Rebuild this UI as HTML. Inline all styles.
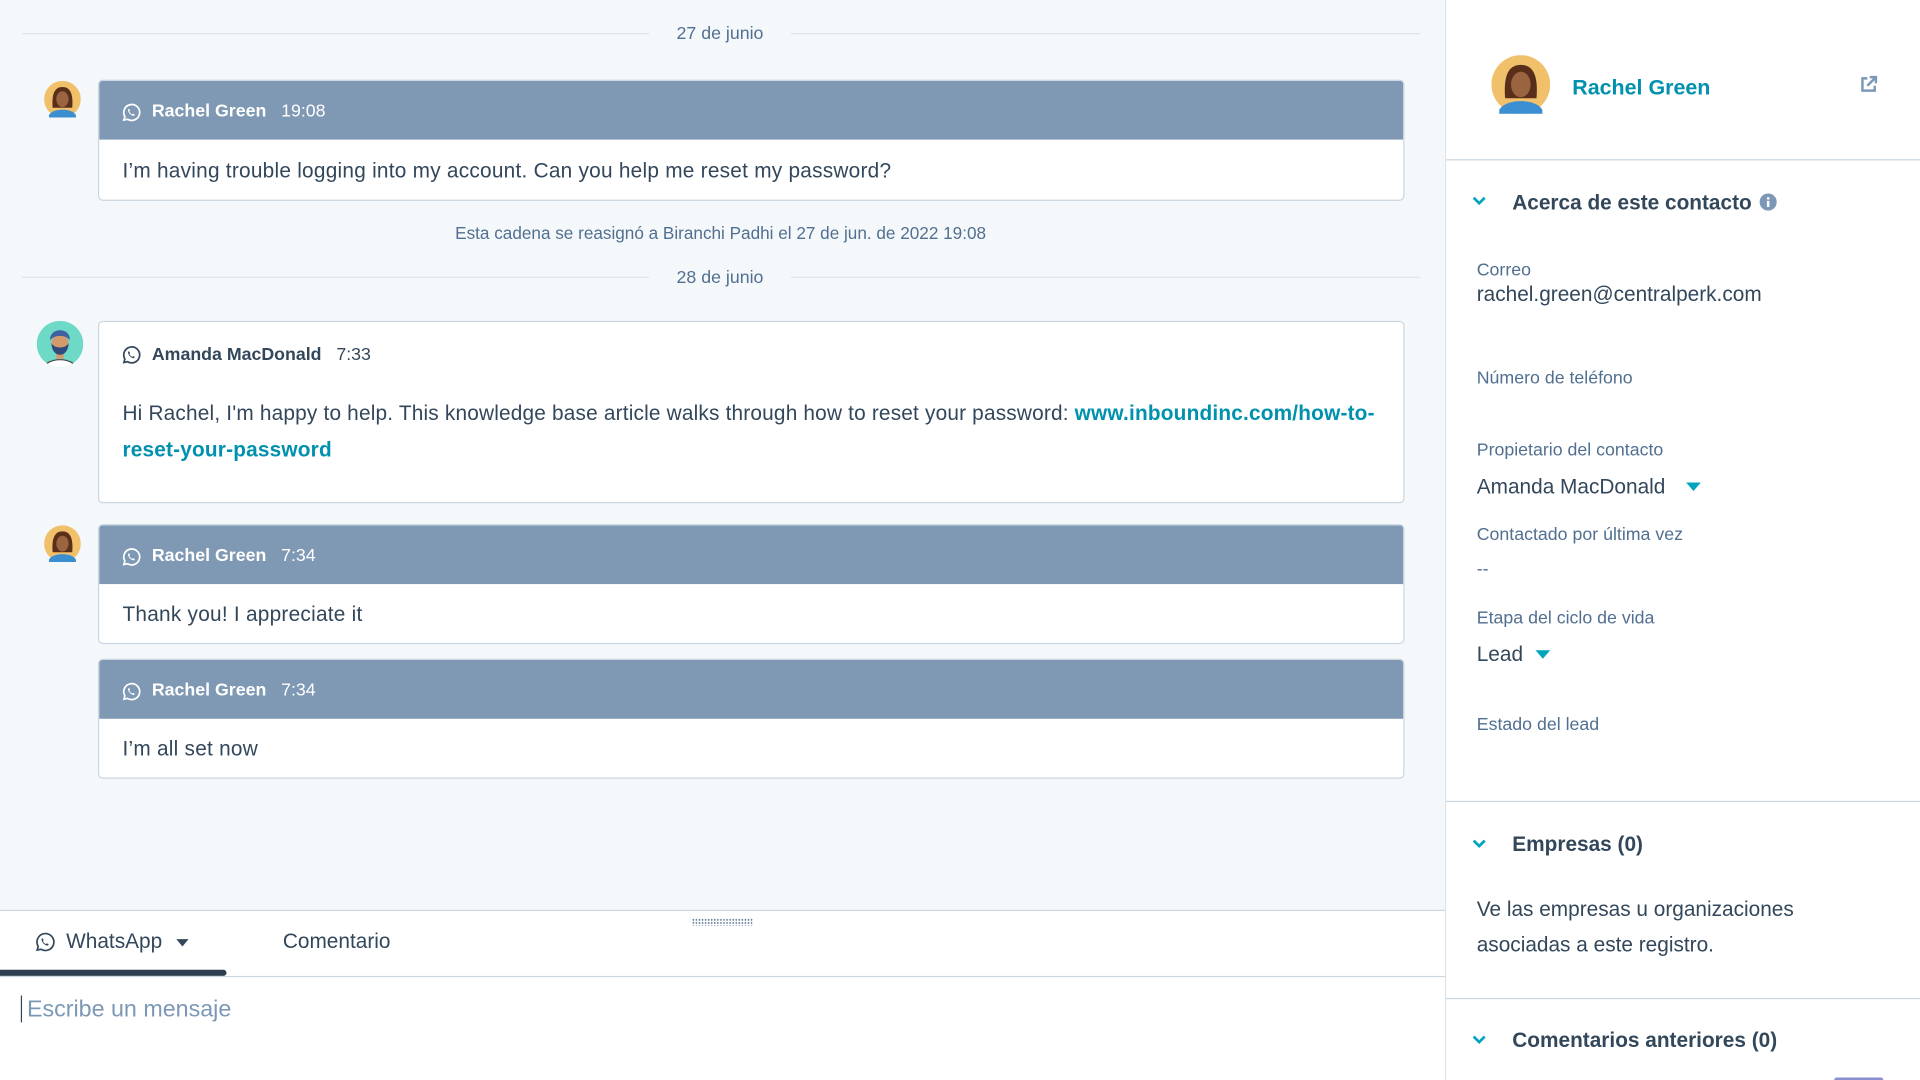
<!DOCTYPE html>
<html><head><meta charset="utf-8">
<style>
html,body{margin:0;padding:0;width:1920px;height:1080px;overflow:hidden;background:#fff}
#w{position:absolute;left:0;top:0;width:1568px;height:882px;transform:scale(1.2244898);transform-origin:0 0;font-family:"Liberation Sans",sans-serif;color:#33475b}
.a{position:absolute}
.t{position:absolute;line-height:20px;white-space:nowrap}
.card{position:absolute;left:80px;width:1067px;background:#fff;border:1px solid #cbd6e2;border-radius:4px;overflow:hidden;box-sizing:border-box}
.hd{position:absolute;left:0;right:0;top:0;height:48px;background:#7f99b5}
.ln{position:absolute;height:1px;background:#dfe3eb}
.lab{position:absolute;left:1206px;font-size:14.5px;color:#516f90;line-height:18px;white-space:nowrap}
.val{position:absolute;left:1206px;font-size:17px;color:#33475b;line-height:20px;white-space:nowrap}
.sec{position:absolute;left:1235px;font-size:17px;font-weight:bold;color:#33475b;line-height:20px;white-space:nowrap}
.chev{position:absolute;left:1202px;width:12px;height:8px}
</style></head><body><div id="w">
<div class="a" style="left:0;top:0;width:1180px;height:743px;background:#f5f8fa"></div>
<div class="a" style="left:1180px;top:0;width:1px;height:882px;background:#dfe3eb"></div>

<div class="ln" style="left:18px;width:512px;top:27px"></div>
<div class="ln" style="left:646px;width:514px;top:27px"></div>
<div class="t" style="left:530px;width:116px;text-align:center;top:18px;font-size:14.5px;color:#516f90">27 de junio</div>

<svg class="a" style="left:36px;top:66px" width="30" height="30" viewBox="0 0 30 30"><circle cx="15" cy="15" r="15" fill="#f0c06b"/><path d="M7 22 C6 10 9 5 15 5 C21 5 24 10 23 22Z" fill="#5a2f1a"/><ellipse cx="15" cy="15" rx="5" ry="6.5" fill="#9a6441"/><path d="M4 28 C7 22 23 22 26 28 L26 30 L4 30Z" fill="#3b8fd0"/></svg>
<div class="card" style="top:65px;height:99px">
 <div class="hd"></div>
 <svg class="a" style="left:18px;top:18px" width="16" height="16" viewBox="0 0 16 16"><path d="M2.2 14 L3 11.2 A6.5 6.5 0 1 1 5.2 13.4Z" fill="none" stroke="#fff" stroke-width="1.4"/><path d="M5.6 5.2 C5.2 7.6 7.8 10.6 10.6 10.6 L11 9.4 L9.6 8.8 L9 9.4 C8 9 7 8 6.6 7 L7.2 6.4 L6.6 5Z" fill="#fff"/></svg>
 <div class="t" style="left:43px;top:15px;font-size:14.5px;color:#fff"><b>Rachel Green</b>&nbsp;&nbsp;&nbsp;19:08</div>
 <div class="t" style="left:19px;top:64px;font-size:17px;letter-spacing:0.2px">I’m having trouble logging into my account. Can you help me reset my password?</div>
</div>

<div class="t" style="left:0;width:1177px;text-align:center;top:180px;font-size:14px;color:#516f90">Esta cadena se reasignó a Biranchi Padhi el 27 de jun. de 2022 19:08</div>

<div class="ln" style="left:18px;width:512px;top:226px"></div>
<div class="ln" style="left:646px;width:514px;top:226px"></div>
<div class="t" style="left:530px;width:116px;text-align:center;top:217px;font-size:14.5px;color:#516f90">28 de junio</div>

<svg class="a" style="left:30px;top:262px" width="38" height="38" viewBox="0 0 38 38"><defs><clipPath id="cc"><circle cx="19" cy="19" r="19"/></clipPath></defs><circle cx="19" cy="19" r="19" fill="#6fd9c7"/><g clip-path="url(#cc)"><path d="M5 40 C7 29 31 29 33 40Z" fill="#fff" stroke="#444" stroke-width="1"/><rect x="16" y="24" width="6" height="7" fill="#d39a6c"/><ellipse cx="19" cy="19" rx="7" ry="8" fill="#d39a6c"/><path d="M12 18 C12 31 26 31 26 18 C24 23 14 23 12 18Z" fill="#2f4c7a"/><path d="M11 16 C10 5 28 5 27 16 C24 11 14 11 11 16Z" fill="#3f63a0"/></g></svg>
<div class="card" style="top:262px;height:149px">
 <svg class="a" style="left:18px;top:19px" width="16" height="16" viewBox="0 0 16 16"><path d="M2.2 14 L3 11.2 A6.5 6.5 0 1 1 5.2 13.4Z" fill="none" stroke="#33475b" stroke-width="1.4"/><path d="M5.6 5.2 C5.2 7.6 7.8 10.6 10.6 10.6 L11 9.4 L9.6 8.8 L9 9.4 C8 9 7 8 6.6 7 L7.2 6.4 L6.6 5Z" fill="#33475b"/></svg>
 <div class="t" style="left:43px;top:17px;font-size:14.5px;color:#33475b"><b>Amanda MacDonald</b>&nbsp;&nbsp;&nbsp;7:33</div>
 <div class="a" style="left:19px;top:60px;font-size:17px;line-height:30px;white-space:nowrap;letter-spacing:0.15px">Hi Rachel, I'm happy to help. This knowledge base article walks through how to reset your password: <b style="color:#0091ae">www.inboundinc.com/how-to-</b><br><b style="color:#0091ae">reset-your-password</b></div>
</div>

<svg class="a" style="left:36px;top:429px" width="30" height="30" viewBox="0 0 30 30"><circle cx="15" cy="15" r="15" fill="#f0c06b"/><path d="M7 22 C6 10 9 5 15 5 C21 5 24 10 23 22Z" fill="#5a2f1a"/><ellipse cx="15" cy="15" rx="5" ry="6.5" fill="#9a6441"/><path d="M4 28 C7 22 23 22 26 28 L26 30 L4 30Z" fill="#3b8fd0"/></svg>
<div class="card" style="top:428px;height:98px">
 <div class="hd"></div>
 <svg class="a" style="left:18px;top:18px" width="16" height="16" viewBox="0 0 16 16"><path d="M2.2 14 L3 11.2 A6.5 6.5 0 1 1 5.2 13.4Z" fill="none" stroke="#fff" stroke-width="1.4"/><path d="M5.6 5.2 C5.2 7.6 7.8 10.6 10.6 10.6 L11 9.4 L9.6 8.8 L9 9.4 C8 9 7 8 6.6 7 L7.2 6.4 L6.6 5Z" fill="#fff"/></svg>
 <div class="t" style="left:43px;top:15px;font-size:14.5px;color:#fff"><b>Rachel Green</b>&nbsp;&nbsp;&nbsp;7:34</div>
 <div class="t" style="left:19px;top:63px;font-size:17px;letter-spacing:0.2px">Thank you! I appreciate it</div>
</div>

<div class="card" style="top:538px;height:98px">
 <div class="hd"></div>
 <svg class="a" style="left:18px;top:18px" width="16" height="16" viewBox="0 0 16 16"><path d="M2.2 14 L3 11.2 A6.5 6.5 0 1 1 5.2 13.4Z" fill="none" stroke="#fff" stroke-width="1.4"/><path d="M5.6 5.2 C5.2 7.6 7.8 10.6 10.6 10.6 L11 9.4 L9.6 8.8 L9 9.4 C8 9 7 8 6.6 7 L7.2 6.4 L6.6 5Z" fill="#fff"/></svg>
 <div class="t" style="left:43px;top:15px;font-size:14.5px;color:#fff"><b>Rachel Green</b>&nbsp;&nbsp;&nbsp;7:34</div>
 <div class="t" style="left:19px;top:63px;font-size:17px;letter-spacing:0.2px">I’m all set now</div>
</div>

<div class="a" style="left:0;top:743px;width:1180px;height:1px;background:#cbd6e2"></div>
<div class="a" style="left:565px;top:750px;width:50px;height:6px;background-image:radial-gradient(circle,#516f90 0.7px,transparent 0.8px);background-size:2.5px 2.5px"></div>
<svg class="a" style="left:28px;top:761px" width="17" height="17" viewBox="0 0 16 16"><path d="M2.2 14 L3 11.2 A6.5 6.5 0 1 1 5.2 13.4Z" fill="none" stroke="#33475b" stroke-width="1.3"/><path d="M5.6 5.2 C5.2 7.6 7.8 10.6 10.6 10.6 L11 9.4 L9.6 8.8 L9 9.4 C8 9 7 8 6.6 7 L7.2 6.4 L6.6 5Z" fill="#33475b"/></svg>
<div class="t" style="left:54px;top:759px;font-size:17px">WhatsApp</div>
<div class="a" style="left:144px;top:767px;width:0;height:0;border-left:5px solid transparent;border-right:5px solid transparent;border-top:6px solid #33475b"></div>
<div class="t" style="left:231px;top:759px;font-size:17px">Comentario</div>
<div class="a" style="left:0;top:792px;width:185px;height:5px;background:#2d3e50;border-radius:0 3px 3px 0"></div>
<div class="a" style="left:0;top:797px;width:1180px;height:1px;background:#cbd6e2"></div>
<div class="a" style="left:17px;top:813px;width:1px;height:22px;background:#33475b"></div>
<div class="t" style="left:22px;top:813px;font-size:19px;line-height:24px;color:#7c98b6">Escribe un mensaje</div>

<svg class="a" style="left:1218px;top:45px" width="48" height="48" viewBox="0 0 30 30"><circle cx="15" cy="15" r="15" fill="#f0c06b"/><path d="M7 22 C6 10 9 5 15 5 C21 5 24 10 23 22Z" fill="#5a2f1a"/><ellipse cx="15" cy="15" rx="5" ry="6.5" fill="#9a6441"/><path d="M4 28 C7 22 23 22 26 28 L26 30 L4 30Z" fill="#3b8fd0"/></svg>
<div class="t" style="left:1284px;top:61px;font-size:17.5px;font-weight:bold;color:#0091ae">Rachel Green</div>
<svg class="a" style="left:1518px;top:61px" width="16" height="16" viewBox="0 0 16 16"><path d="M7 3 H3 V13 H13 V9" fill="none" stroke="#7c98b6" stroke-width="2"/><path d="M9 2 H14 V7 M14 2 L7 9" fill="none" stroke="#7c98b6" stroke-width="2"/></svg>
<div class="a" style="left:1181px;top:130px;width:387px;height:1px;background:#cbd6e2"></div>

<svg class="chev" style="top:160px" viewBox="0 0 12 8"><path d="M1.5 1.5 L6 6 L10.5 1.5" fill="none" stroke="#00a4bd" stroke-width="2.2"/></svg>
<div class="sec" style="top:156px">Acerca de este contacto</div>
<svg class="a" style="left:1437px;top:158px" width="14" height="14" viewBox="0 0 14 14"><circle cx="7" cy="7" r="7" fill="#7c98b6"/><rect x="6" y="6" width="2" height="5" fill="#fff"/><circle cx="7" cy="4" r="1.1" fill="#fff"/></svg>

<div class="lab" style="top:212px">Correo</div>
<div class="val" style="top:231px">rachel.green@centralperk.com</div>
<div class="lab" style="top:300px">Número de teléfono</div>
<div class="lab" style="top:359px">Propietario del contacto</div>
<div class="val" style="top:388px">Amanda MacDonald</div>
<div class="a" style="left:1377px;top:394px;border-left:6px solid transparent;border-right:6px solid transparent;border-top:7px solid #00a4bd"></div>
<div class="lab" style="top:428px">Contactado por última vez</div>
<div class="lab" style="top:456px">--</div>
<div class="lab" style="top:496px">Etapa del ciclo de vida</div>
<div class="val" style="top:525px">Lead</div>
<div class="a" style="left:1254px;top:531px;border-left:6px solid transparent;border-right:6px solid transparent;border-top:7px solid #00a4bd"></div>
<div class="lab" style="top:583px">Estado del lead</div>

<div class="a" style="left:1181px;top:654px;width:387px;height:1px;background:#cbd6e2"></div>
<svg class="chev" style="top:685px" viewBox="0 0 12 8"><path d="M1.5 1.5 L6 6 L10.5 1.5" fill="none" stroke="#00a4bd" stroke-width="2.2"/></svg>
<div class="sec" style="top:680px">Empresas (0)</div>
<div class="a" style="left:1206px;top:728px;font-size:17px;line-height:29px;color:#33475b">Ve las empresas u organizaciones<br>asociadas a este registro.</div>
<div class="a" style="left:1181px;top:815px;width:387px;height:1px;background:#cbd6e2"></div>
<svg class="chev" style="top:845px" viewBox="0 0 12 8"><path d="M1.5 1.5 L6 6 L10.5 1.5" fill="none" stroke="#00a4bd" stroke-width="2.2"/></svg>
<div class="sec" style="top:840px">Comentarios anteriores (0)</div>
<div class="a" style="left:1498px;top:880px;width:40px;height:2px;background:#8a8fd0;border-radius:2px 2px 0 0"></div>
</div></body></html>
